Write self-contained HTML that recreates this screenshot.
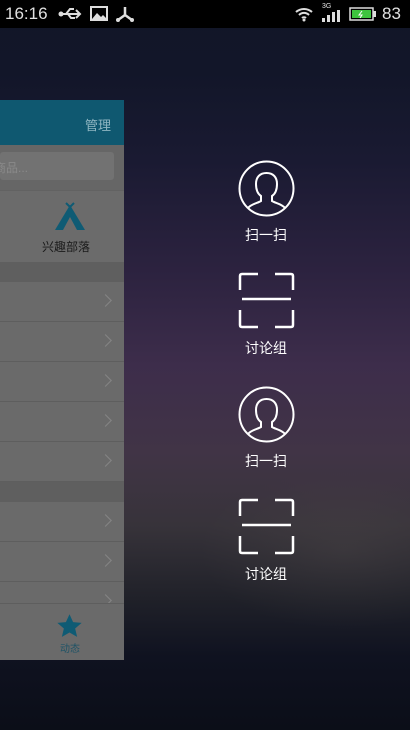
<!DOCTYPE html>
<html><head><meta charset="utf-8"><style>
*{margin:0;padding:0;box-sizing:border-box}
body{width:410px;height:730px;overflow:hidden;position:relative;font-family:"Liberation Sans","Noto Sans CJK SC",sans-serif;
background:linear-gradient(180deg,#111628 0%,#121629 10%,#1a1a32 22%,#2d2340 38%,#3d2d4b 50%,#413446 62%,#37333a 72%,#202129 82%,#0f1220 90%,#0b0e18 100%);}
.glow{position:absolute;left:200px;top:470px;width:240px;height:160px;background:radial-gradient(ellipse at 60% 50%,rgba(100,92,88,.22),rgba(0,0,0,0) 70%)}
.sb{position:absolute;left:0;top:0;width:410px;height:28px;background:#000;color:#e0e0e0;font-size:17px}
.panel{position:absolute;left:0;top:100px;width:124px;height:560px;background:#6a6a6a;overflow:hidden}
.hd{height:45px;background:#0f5870;color:#8fb6c2;font-size:13px;text-align:right;padding:15px 13px 0 0}
.srch{height:45px;background:#666;position:relative}
.srch div{position:absolute;left:0;top:7px;width:114px;height:28px;background:#727272;border-radius:3px;color:#8a8a8a;font-size:12px;padding:7px 0 0 0;text-indent:-6px}
.grid{height:72px;background:#6b6b6b;position:relative;border-top:1px solid #626262}
.sep{height:20px;background:#5f5f5f}
.row{height:40px;border-bottom:1px solid #5e5e5e;position:relative}
.row:after{content:"";position:absolute;left:101px;top:14px;width:8px;height:8px;border-right:1.5px solid #858585;border-top:1.5px solid #858585;transform:rotate(45deg)}
.tab{position:absolute;left:0;top:503px;width:124px;height:57px;background:#6a6a6a;border-top:1px solid #5e5e5e}
.it{position:absolute;left:226px;width:80px;text-align:center;color:#fff;font-size:14px}
</style></head><body>
<div class="glow"></div>
<div class="sb">
<span style="position:absolute;left:5px;top:4px">16:16</span>
<svg style="position:absolute;left:58px;top:6px" width="26" height="16" viewBox="0 0 26 16"><path d="M2 8H22M18 4l4 4-4 4M8 8l4-5h4M10 8l3 4h4" stroke="#ddd" stroke-width="2" fill="none"/><circle cx="3" cy="8" r="2.5" fill="#ddd"/></svg>
<svg style="position:absolute;left:90px;top:6px" width="18" height="15"><rect x="1" y="1" width="16" height="13" fill="none" stroke="#ddd" stroke-width="2"/><path d="M2 13l5-6 4 4 2-2 4 4z" fill="#ddd"/></svg>
<svg style="position:absolute;left:115px;top:5px" width="20" height="18"><path d="M10 2v8L3 15M10 10l7 5" stroke="#ddd" stroke-width="2.5" fill="none"/><circle cx="3" cy="15" r="2" fill="#ddd"/><circle cx="17" cy="15" r="2" fill="#ddd"/></svg>
<svg style="position:absolute;left:294px;top:6px" width="20" height="16"><path d="M2 6a12 12 0 0 1 16 0M5 9a7 7 0 0 1 10 0M8 12a3 3 0 0 1 4 0" stroke="#ddd" stroke-width="2" fill="none"/><circle cx="10" cy="14" r="1.5" fill="#ddd"/></svg>
<span style="position:absolute;left:322px;top:3px;font-size:7px">3G</span>
<svg style="position:absolute;left:322px;top:10px" width="20" height="12"><rect x="0" y="8" width="3" height="4" fill="#ddd"/><rect x="5" y="5" width="3" height="7" fill="#ddd"/><rect x="10" y="2" width="3" height="10" fill="#ddd"/><rect x="15" y="0" width="3" height="12" fill="#ddd"/></svg>
<svg style="position:absolute;left:349px;top:7px" width="28" height="14"><rect x="1" y="1" width="23" height="12" fill="none" stroke="#ddd" stroke-width="1.5"/><rect x="3" y="3" width="19" height="8" fill="#3ec43e"/><rect x="24" y="4" width="3" height="6" fill="#ddd"/><path d="M13 4l-3 4h3l-2 3" stroke="#fff" fill="none"/></svg>
<span style="position:absolute;left:382px;top:4px">83</span>
</div>
<div class="panel">
<div class="hd">管理</div>
<div class="srch"><div>商品...</div></div>
<div class="grid">
<svg style="position:absolute;left:53px;top:11px" width="34" height="30" viewBox="0 0 34 30"><path d="M17 3L32 28H2Z" fill="#0f5b74"/><path d="M17 15L24 28H10Z" fill="#6b6b6b"/><path d="M13 1l4 4 4-4" stroke="#0f5b74" stroke-width="2" fill="none"/></svg>
<div style="position:absolute;left:42px;top:47px;font-size:12px;color:#1a1a1a">兴趣部落</div>
</div>
<div class="sep"></div>
<div class="row"></div><div class="row"></div><div class="row"></div><div class="row"></div><div class="row"></div>
<div class="sep"></div>
<div class="row"></div><div class="row"></div><div class="row"></div>
<div class="tab">
<svg style="position:absolute;left:56px;top:9px" width="27" height="26" viewBox="0 0 24 23"><path d="M12 1l3.2 7 7.6.7-5.8 5 1.8 7.5L12 17.3 5.2 21.2 7 13.7 1.2 8.7l7.6-.7z" fill="#0f5b74"/></svg>
<div style="position:absolute;left:60px;top:36px;font-size:10px;color:#1f5366">动态</div>
</div>
</div>
<svg style="position:absolute;left:238px;top:160px" width="57" height="57" viewBox="0 0 57 57"><circle cx="28.5" cy="28.5" r="27" fill="none" stroke="#fff" stroke-width="2"/><path d="M10 48c3-4 10-5 13-7v-5c-3-2-5-6-5-12 0-7 4-11 10.5-11S39 17 39 24c0 6-2 10-5 12v5c3 2 10 3 13 7" fill="none" stroke="#fff" stroke-width="2"/></svg>
<div class="it" style="top:225px">扫一扫</div>
<svg style="position:absolute;left:238px;top:272px" width="57" height="57" viewBox="0 0 57 57"><path d="M20 2H4Q2 2 2 4V18M37 2H53Q55 2 55 4V18M2 38V53Q2 55 4 55H20M55 38V53Q55 55 53 55H37M4 27H53" fill="none" stroke="#fff" stroke-width="2.5"/></svg>
<div class="it" style="top:338px">讨论组</div>
<svg style="position:absolute;left:238px;top:386px" width="57" height="57" viewBox="0 0 57 57"><circle cx="28.5" cy="28.5" r="27" fill="none" stroke="#fff" stroke-width="2"/><path d="M10 48c3-4 10-5 13-7v-5c-3-2-5-6-5-12 0-7 4-11 10.5-11S39 17 39 24c0 6-2 10-5 12v5c3 2 10 3 13 7" fill="none" stroke="#fff" stroke-width="2"/></svg>
<div class="it" style="top:451px">扫一扫</div>
<svg style="position:absolute;left:238px;top:498px" width="57" height="57" viewBox="0 0 57 57"><path d="M20 2H4Q2 2 2 4V18M37 2H53Q55 2 55 4V18M2 38V53Q2 55 4 55H20M55 38V53Q55 55 53 55H37M4 27H53" fill="none" stroke="#fff" stroke-width="2.5"/></svg>
<div class="it" style="top:564px">讨论组</div>
</body></html>
